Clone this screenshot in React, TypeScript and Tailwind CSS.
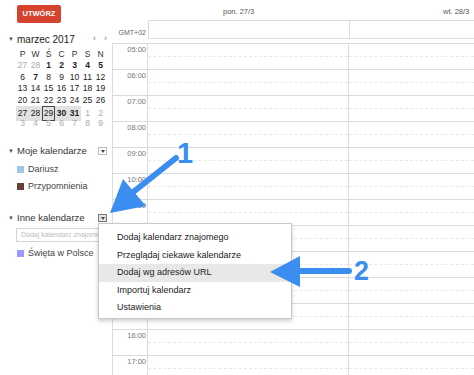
import React from 'react';

// --- DANE ---
const weekDays = ['P', 'W', 'Ś', 'C', 'P', 'S', 'N'];
const weeks: number[][] = [
    [27, 28, 1, 2, 3, 4, 5],
    [6, 7, 8, 9, 10, 11, 12],
    [13, 14, 15, 16, 17, 18, 19],
    [20, 21, 22, 23, 24, 25, 26],
    [27, 28, 29, 30, 31, 1, 2],
    [3, 4, 5, 6, 7, 8, 9],
];
const boldDays = [1, 2, 3, 4, 5, 7, 30, 31];
const hours = ['05:00', '06:00', '07:00', '08:00', '09:00', '10:00', '11:00', '12:00', '13:00', '14:00', '15:00', '16:00', '17:00'];
const menuItems = ['Dodaj kalendarz znajomego', 'Przeglądaj ciekawe kalendarze', 'Dodaj wg adresów URL', 'Importuj kalendarz', 'Ustawienia'];

// --- MAŁE KOMPONENTY ---
const SmallDrop = ({ active = false }: { active?: boolean }) => (
    <div className={`w-[9px] h-[8px] border flex items-center justify-center ${active ? 'border-[#777] bg-[#e4e4e4]' : 'border-[#bbb] bg-white'}`}>
        <div className="w-0 h-0 border-l-[2.5px] border-r-[2.5px] border-t-[3px] border-l-transparent border-r-transparent border-t-[#444]" />
    </div>
);

const SectionTitle = ({ title, active }: { title: string; active?: boolean }) => (
    <div className="flex items-center h-[14px] pl-[8px] pr-[5px]">
        <span className="text-[6px] text-[#555] w-[9px]">▼</span>
        <span className="flex-1 text-[9.5px] text-[#333]">{title}</span>
        <SmallDrop active={active} />
    </div>
);

const CalItem = ({ color, label }: { color: string; label: string }) => (
    <div className="flex items-center h-[17px] pl-[17px]">
        <div className="w-[7px] h-[7px] mr-[4px]" style={{ backgroundColor: color }} />
        <span className="text-[9px] text-[#444]">{label}</span>
    </div>
);

const MiniCalendar = () => (
    <div>
        <div className="flex items-center h-[12px] mt-[10px] pl-[8px]">
            <span className="text-[6px] text-[#555] w-[9px]">▼</span>
            <span className="text-[10px] text-[#222] flex-1">marzec 2017</span>
            <span className="text-[9px] text-[#777] mr-[8px]">‹</span>
            <span className="text-[9px] text-[#777] mr-[5px]">›</span>
        </div>
        <div className="ml-[16px] mt-[3px] w-[91px]">
            <div className="grid grid-cols-7 h-[11px] items-center">
                {weekDays.map((d, i) => (
                    <div key={i} className="text-center text-[8.5px] text-[#333]">{d}</div>
                ))}
            </div>
            {weeks.map((w, wi) => (
                <div key={wi} className="grid grid-cols-7 h-[11.7px] items-center">
                    {w.map((d, di) => {
                        const other = (wi === 0 && d > 20) || (wi >= 4 && d < 10);
                        const sel = wi === 4 && di < 5;
                        const today = wi === 4 && d === 29;
                        return (
                            <div
                                key={di}
                                className={`h-full flex items-center justify-center text-[8.5px] ${sel ? 'bg-[#e1e1e1]' : ''} ${today ? 'border border-[#444]' : ''} ${other ? 'text-[#aaa]' : 'text-[#222]'} ${!other && boldDays.includes(d) ? 'font-bold' : ''}`}
                            >
                                {d}
                            </div>
                        );
                    })}
                </div>
            ))}
        </div>
    </div>
);

const Sidebar = () => (
    <aside className="w-[112px] shrink-0">
        <div className="pt-[5px] pl-[17px]">
            <div className="w-[44px] h-[18px] bg-[#d5432f] rounded-[2px] flex items-center justify-center text-white text-[7.5px] font-bold">
                UTWÓRZ
            </div>
        </div>
        <MiniCalendar />
        <div className="mt-[15px]">
            <SectionTitle title="Moje kalendarze" />
            <div className="mt-[3px]">
                <CalItem color="#9fc6e7" label="Dariusz" />
                <CalItem color="#6b3f31" label="Przypomnienia" />
            </div>
        </div>
        <div className="mt-[16px]">
            <SectionTitle title="Inne kalendarze" active />
            <div className="ml-[16px] mt-[3px] w-[84px] h-[14px] border border-[#d4d4d4] flex items-center pl-[4px] overflow-hidden">
                <span className="text-[7px] text-[#bbb] whitespace-nowrap">Dodaj kalendarz znajomego</span>
            </div>
            <div className="mt-[3px]">
                <CalItem color="#9a9cff" label="Święta w Polsce" />
            </div>
        </div>
    </aside>
);

// --- SIATKA CZASU ---
const TimeGrid = () => (
    <div className="flex-1 min-w-0">
        <div className="flex h-[20px] items-center pt-[4px]">
            <div className="w-[36px]" />
            <div className="w-[201px] pl-[75px] text-[7.5px] text-[#555]">pon. 27/3</div>
            <div className="flex-1 pl-[94px] text-[7.5px] text-[#555]">wt. 28/3</div>
        </div>
        <div className="flex h-[19px]">
            <div className="w-[36px] flex items-end justify-end pr-[2px] pb-[1px] text-[7px] text-[#666]">GMT+02</div>
            <div className="flex-1 flex border border-r-0 border-[#dcdcdc]">
                <div className="w-[201px] border-r border-[#dcdcdc]" />
                <div className="flex-1" />
            </div>
        </div>
        <div className="mt-[4px] border-l border-[#dcdcdc]">
            {hours.map(h => (
                <div key={h} className="flex h-[26px] border-t border-[#dcdcdc]">
                    <div className="w-[35px] border-r border-[#dcdcdc] text-right pr-[1px] pt-[1px] text-[7.5px] text-[#777] leading-[9px]">{h}</div>
                    <div className="w-[201px] border-r border-[#dcdcdc]">
                        <div className="h-[13px] border-b border-dashed border-[#e8e8e8]" />
                    </div>
                    <div className="flex-1">
                        <div className="h-[13px] border-b border-dashed border-[#e8e8e8]" />
                    </div>
                </div>
            ))}
        </div>
    </div>
);

// --- MENU I ADNOTACJE ---
const DropdownMenu = () => (
    <div className="absolute left-[98px] top-[223px] w-[194px] h-[96px] bg-white border border-[#c8c8c8] shadow-[0_2px_4px_rgba(0,0,0,0.2)] pt-[5px]">
        {menuItems.map((item, i) => (
            <div key={item} className={`h-[17.5px] flex items-center pl-[18px] text-[9px] text-[#222] ${i === 2 ? 'bg-[#e8e8e8]' : ''}`}>
                {item}
            </div>
        ))}
    </div>
);

const Annotations = () => (
    <svg className="absolute inset-0 pointer-events-none" width="474" height="375" viewBox="0 0 474 375">
        <g fill="#3b8ef0" stroke="#3b8ef0">
            <line x1="176" y1="158" x2="132" y2="193" strokeWidth="6" strokeLinecap="round" />
            <polygon points="110,213 123,179 146,206" stroke="none" />
            <line x1="349" y1="271" x2="296" y2="271" strokeWidth="6" strokeLinecap="round" />
            <polygon points="270,272 300,256 300,287" stroke="none" />
        </g>
        <text x="177" y="163" fill="#3b8ef0" fontSize="29" fontWeight="bold" fontFamily="'Liberation Sans', Arial, sans-serif">1</text>
        <text x="354" y="280" fill="#3b8ef0" fontSize="27" fontWeight="bold" fontFamily="'Liberation Sans', Arial, sans-serif">2</text>
    </svg>
);

export default function App() {
    return (
        <div className="relative w-[474px] h-[375px] overflow-hidden bg-white font-['Liberation_Sans',Arial,sans-serif]">
            <div className="flex h-full">
                <Sidebar />
                <TimeGrid />
            </div>
            <DropdownMenu />
            <Annotations />
        </div>
    );
}
